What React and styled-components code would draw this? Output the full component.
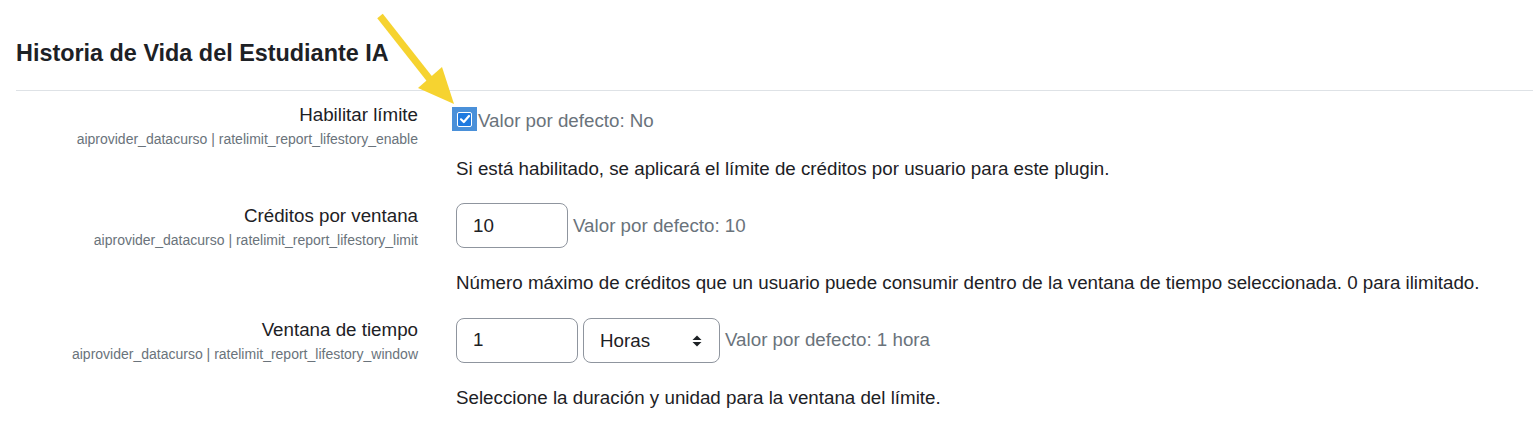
import React from "react";
import styled, { createGlobalStyle } from "styled-components";

const GlobalStyle = createGlobalStyle`
  body {
    margin: 0;
    background: #ffffff;
    font-family: "Liberation Sans", Arial, sans-serif;
    color: #1d2125;
  }
`;

const settings = [
  {
    label: "Habilitar límite",
    id: "aiprovider_datacurso | ratelimit_report_lifestory_enable",
    type: "checkbox",
    def: "Valor por defecto: No",
    desc: "Si está habilitado, se aplicará el límite de créditos por usuario para este plugin.",
  },
  {
    label: "Créditos por ventana",
    id: "aiprovider_datacurso | ratelimit_report_lifestory_limit",
    type: "number",
    value: "10",
    def: "Valor por defecto: 10",
    desc: "Número máximo de créditos que un usuario puede consumir dentro de la ventana de tiempo seleccionada. 0 para ilimitado.",
  },
  {
    label: "Ventana de tiempo",
    id: "aiprovider_datacurso | ratelimit_report_lifestory_window",
    type: "duration",
    value: "1",
    unit: "Horas",
    def: "Valor por defecto: 1 hora",
    desc: "Seleccione la duración y unidad para la ventana del límite.",
  },
];

const App = () => {
  return (
    <>
      <GlobalStyle />
      <Page>
        <Heading>Historia de Vida del Estudiante IA</Heading>
        <Rule />
        {settings.map((s) => (
          <Row key={s.id}>
            <LabelCol>
              <Label>{s.label}</Label>
              <SettingId>{s.id}</SettingId>
            </LabelCol>
            <Content>
              <Controls $check={s.type === "checkbox"}>
                {s.type === "checkbox" && (
                  <CheckHighlight>
                    <CheckBox>
                      <svg width="12" height="12" viewBox="0 0 12 12">
                        <path d="M2 6.3 L4.8 9 L10 3" fill="none" stroke="#fff" strokeWidth="2.2" strokeLinecap="round" strokeLinejoin="round" />
                      </svg>
                    </CheckBox>
                  </CheckHighlight>
                )}
                {s.type === "number" && <TextInput $width={112}>{s.value}</TextInput>}
                {s.type === "duration" && (
                  <>
                    <TextInput $width={122}>{s.value}</TextInput>
                    <Select>
                      {s.unit}
                      <svg width="10" height="14" viewBox="0 0 10 14">
                        <path d="M5 1.5 L9.5 6 L0.5 6 Z" fill="#1d2125" />
                        <path d="M5 12.5 L9.5 8 L0.5 8 Z" fill="#1d2125" />
                      </svg>
                    </Select>
                  </>
                )}
                <Default $check={s.type === "checkbox"}>{s.def}</Default>
              </Controls>
              <Description>{s.desc}</Description>
            </Content>
          </Row>
        ))}
        <Arrow width="100" height="120" viewBox="0 0 100 120">
          <line x1="10" y1="16" x2="62" y2="82" stroke="#f6d330" strokeWidth="7" />
          <polygon points="48,88 72,67 84,104" fill="#f6d330" />
        </Arrow>
      </Page>
    </>
  );
};

export default App;

const Page = styled.div`
  position: relative;
  padding: 39px 0 0 16px;
`;

const Heading = styled.h3`
  margin: 0;
  font-size: 23.4px;
  line-height: 28px;
  font-weight: 700;
  color: #1d2125;
`;

const Rule = styled.hr`
  margin: 23px 0 11px 0;
  border: 0;
  border-top: 1px solid #dee2e6;
`;

const Row = styled.div`
  display: grid;
  grid-template-columns: 402px 1fr;
  column-gap: 38px;
  margin-bottom: 20px;

  &:last-of-type {
    margin-bottom: 0;
  }
`;

const LabelCol = styled.div`
  text-align: right;
`;

const Label = styled.div`
  font-size: 18.75px;
  line-height: 26px;
  color: #1d2125;
`;

const SettingId = styled.div`
  font-size: 14px;
  line-height: 22px;
  color: #6a737b;
`;

const Content = styled.div`
  display: flex;
  flex-direction: column;
`;

const Controls = styled.div`
  display: flex;
  align-items: ${(p) => (p.$check ? "flex-start" : "center")};
  padding-top: ${(p) => (p.$check ? "5px" : "0")};
`;

const CheckHighlight = styled.span`
  width: 25px;
  height: 24px;
  margin-left: -4px;
  background: #4a90d9;
  display: flex;
  align-items: center;
  justify-content: center;
`;

const CheckBox = styled.span`
  width: 13px;
  height: 13px;
  border: 1.5px solid #ffffff;
  border-radius: 2px;
  background: #1f7ae0;
  display: flex;
  align-items: center;
  justify-content: center;
`;

const TextInput = styled.div`
  box-sizing: border-box;
  width: ${(p) => p.$width}px;
  height: 45px;
  padding: 0 16px;
  border: 1px solid #8f959e;
  border-radius: 8px;
  display: flex;
  align-items: center;
  font-size: 18.75px;
  color: #1d2125;
`;

const Select = styled.div`
  box-sizing: border-box;
  width: 137px;
  height: 45px;
  margin-top: 1px;
  margin-left: 5px;
  padding: 0 17px 0 16px;
  border: 1px solid #8f959e;
  border-radius: 8px;
  display: flex;
  align-items: center;
  justify-content: space-between;
  font-size: 18.75px;
  color: #1d2125;
`;

const Default = styled.span`
  margin-left: ${(p) => (p.$check ? "1px" : "5px")};
  margin-top: ${(p) => (p.$check ? "1px" : "0")};
  font-size: 18.75px;
  line-height: 26px;
  color: #6a737b;
`;

const Description = styled.div`
  margin-top: 21px;
  font-size: 18.75px;
  line-height: 28px;
  color: #1d2125;
`;

const Arrow = styled.svg`
  position: absolute;
  left: 370px;
  top: 0;
  pointer-events: none;
`;
